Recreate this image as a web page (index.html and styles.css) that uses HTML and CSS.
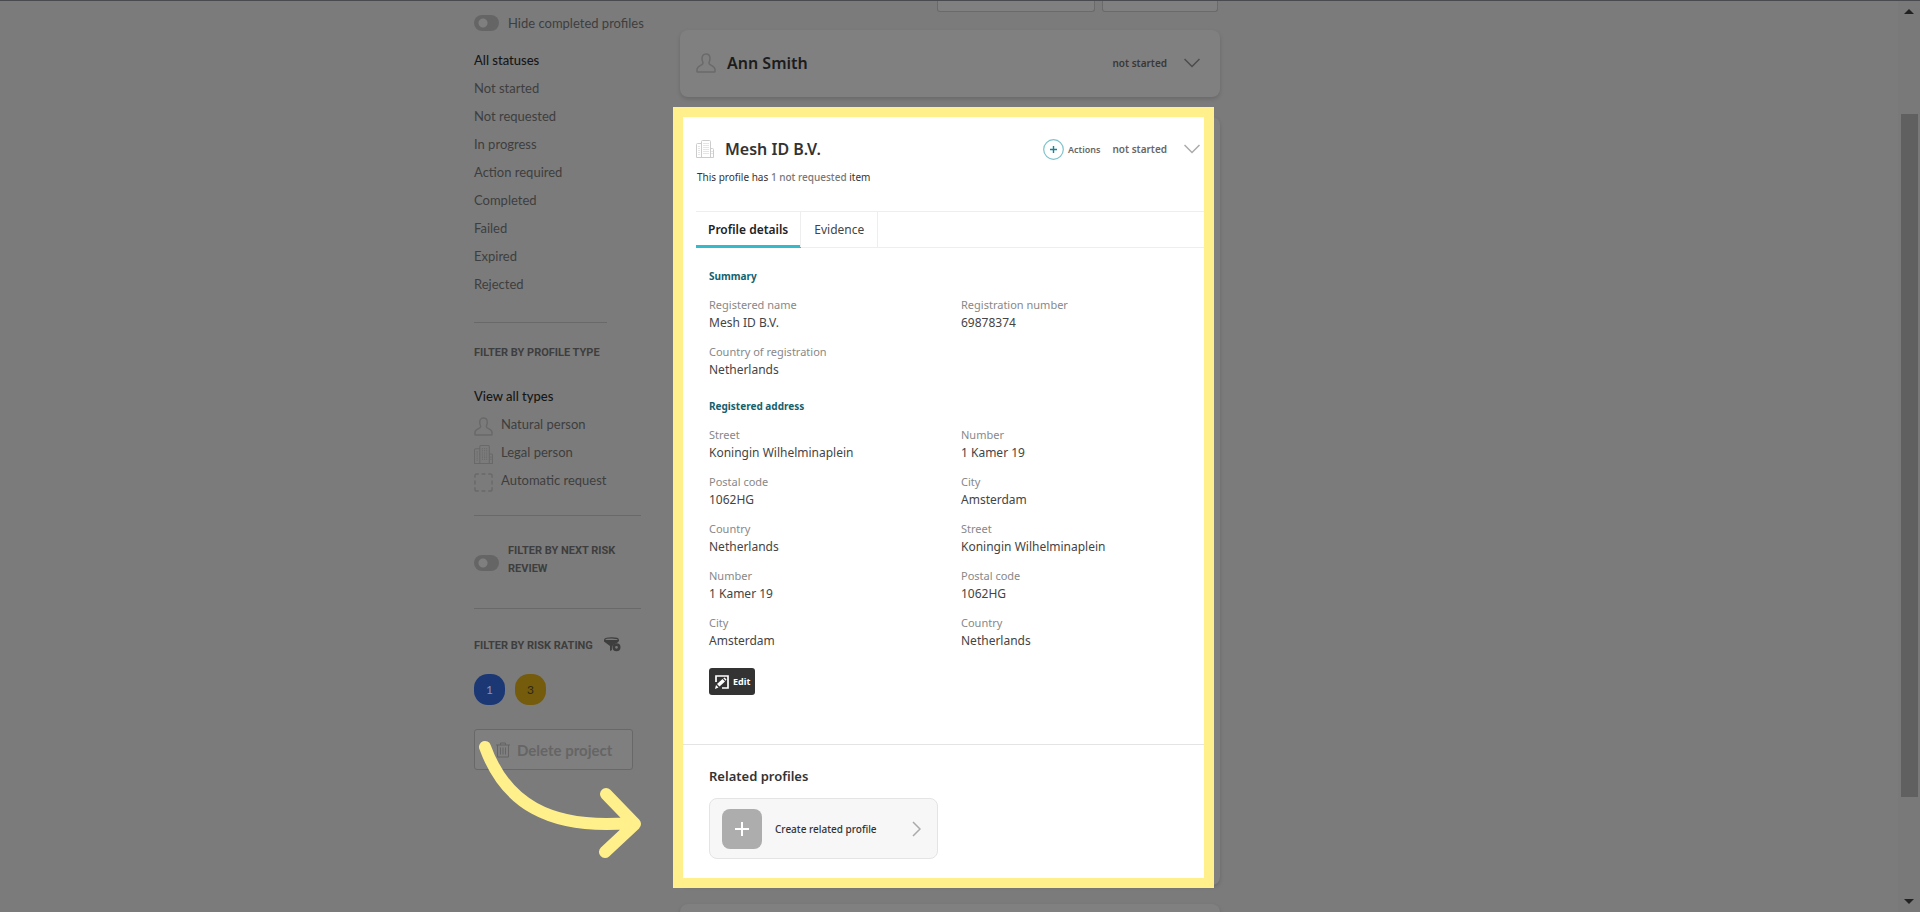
FILE: index.html
```
<!DOCTYPE html>
<html lang="en">
<head>
    <meta charset="utf-8">
    <title>Profiles</title>
    <link rel="stylesheet" href="styles.css">
</head>
<body>
    <svg class="sprite" aria-hidden="true">
        <symbol id="icon-person" viewBox="0 0 20 20">
            <path d="M10 1C7.400 1 6 2.900 6 5.500C6 8 7 8.800 7 10.200C7 12.500 1 12.300 1 16.500V18.500Q1 19 1.500 19H18.500Q19 19 19 18.500V16.500C19 12.300 13 12.500 13 10.200C13 8.800 14 8 14 5.500C14 2.900 12.600 1 10 1Z" fill="none" stroke="currentColor" stroke-width="1.500"/>
        </symbol>
        <symbol id="icon-building" viewBox="0 0 18 18">
            <path d="M5.500 17.500V1.500Q5.500 .5 6.500 .5H13.500Q14.500 .5 14.500 1.500V17.500M5.500 3.500H1.500Q.5 3.500 .5 4.500V17.500H17.500V9.500Q17.500 8.500 16.500 8.500H14.500" fill="none" stroke="currentColor"/>
            <path d="M8 3V15M10 3V15M12 3V15M3 6V15M16 11V15" fill="none" stroke="currentColor" stroke-dasharray="1 1"/>
        </symbol>
        <symbol id="icon-dashed" viewBox="0 0 20 20">
            <path d="M1 5V3Q1 1 3 1H5M8 1H12M15 1H17Q19 1 19 3V5M19 8V12M19 15V17Q19 19 17 19H15M12 19H8M5 19H3Q1 19 1 17V15M1 12V8" fill="none" stroke="currentColor" stroke-width="1.500"/>
        </symbol>
        <symbol id="icon-down" viewBox="0 0 16 10">
            <path d="M.5 1L8 8.500L15.500 1" fill="none" stroke="currentColor" stroke-width="1.500"/>
        </symbol>
    </svg>

    <div class="page">
        <div class="container">
            <aside class="sidebar">
                <label class="toggle">
                    <input type="checkbox">
                    <span>Hide completed profiles</span>
                </label>
                <ul class="filter-list statuses">
                    <li><a href="#" class="active">All statuses</a></li>
                    <li><a href="#">Not started</a></li>
                    <li><a href="#">Not requested</a></li>
                    <li><a href="#">In progress</a></li>
                    <li><a href="#">Action required</a></li>
                    <li><a href="#">Completed</a></li>
                    <li><a href="#">Failed</a></li>
                    <li><a href="#">Expired</a></li>
                    <li><a href="#">Rejected</a></li>
                </ul>

                <section class="types">
                    <h3>FILTER BY PROFILE TYPE</h3>
                    <ul class="filter-list">
                        <li><a href="#" class="active">View all types</a></li>
                        <li><a href="#"><svg><use href="#icon-person"/></svg>Natural person</a></li>
                        <li><a href="#"><svg><use href="#icon-building"/></svg>Legal person</a></li>
                        <li><a href="#"><svg><use href="#icon-dashed"/></svg>Automatic request</a></li>
                    </ul>
                </section>

                <section class="review">
                    <label class="toggle">
                        <input type="checkbox">
                        <span class="heading">FILTER BY NEXT RISK REVIEW</span>
                    </label>
                </section>

                <section class="rating">
                    <h3>FILTER BY RISK RATING
                        <svg class="funnel" viewBox="0 0 17 15">
                            <path d="M0 3V4.500L6 9V14L8 13C7.500 9 9 7 13 6L15 4V3Z" fill="currentColor"/>
                            <ellipse cx="7.500" cy="2.500" rx="6.800" ry="1.700" fill="none" stroke="currentColor" stroke-width="1.200"/>
                            <circle cx="12.500" cy="10.300" r="2.700" fill="none" stroke="currentColor" stroke-width="2.600"/>
                        </svg>
                    </h3>
                    <div class="ratings">
                        <button class="rate low">1</button>
                        <button class="rate high">3</button>
                    </div>
                    <button class="delete">
                        <svg viewBox="0 0 14 16">
                            <path d="M0 3H14M4.500 3V1H9.500V3M1.500 3V15H12.500V3M4.500 5.500V12.500M7 5.500V12.500M9.500 5.500V12.500" fill="none" stroke="currentColor"/>
                        </svg>
                        Delete project
                    </button>
                </section>
                <svg class="arrow" viewBox="0 0 170 125">
                    <path d="M11 11C31 66 74 94 156 87M132 58L161 88L131 116"/>
                </svg>
            </aside>

            <main class="main">
                <div class="toolbar">
                    <button class="sort" aria-label="Sort"></button>
                    <button class="group" aria-label="Group"></button>
                </div>

                <article class="card person">
                    <svg class="person-icon"><use href="#icon-person"/></svg>
                    <h2>Ann Smith</h2>
                    <span class="status">not started</span>
                    <button class="expand" aria-label="Expand"><svg><use href="#icon-down"/></svg></button>
                </article>

                <article class="card company">
                    <div class="highlight">
                        <header class="company-head">
                            <svg class="building-icon"><use href="#icon-building"/></svg>
                            <h2>Mesh ID B.V.</h2>
                            <button class="actions">
                                <svg viewBox="0 0 21 21">
                                    <circle cx="10.500" cy="10.500" r="9.800" fill="none" stroke="#7cc3cc" stroke-width="1.200"/>
                                    <path d="M7 10.500H14M10.500 7V14" stroke="#168294" stroke-width="1.400"/>
                                </svg>
                                Actions
                            </button>
                            <span class="status">not started</span>
                            <button class="expand" aria-label="Collapse"><svg><use href="#icon-down"/></svg></button>
                        </header>
                        <p class="note">This profile has <b>1 not requested</b> item</p>

                        <nav class="tabs">
                            <button class="tab active">Profile details</button>
                            <button class="tab">Evidence</button>
                        </nav>

                        <div class="details">
                            <h4>Summary</h4>
                            <dl>
                                <div><dt>Registered name</dt><dd>Mesh ID B.V.</dd></div>
                                <div><dt>Registration number</dt><dd>69878374</dd></div>
                                <div><dt>Country of registration</dt><dd>Netherlands</dd></div>
                            </dl>
                            <h4>Registered address</h4>
                            <dl>
                                <div><dt>Street</dt><dd>Koningin Wilhelminaplein</dd></div>
                                <div><dt>Number</dt><dd>1 Kamer 19</dd></div>
                                <div><dt>Postal code</dt><dd>1062HG</dd></div>
                                <div><dt>City</dt><dd>Amsterdam</dd></div>
                                <div><dt>Country</dt><dd>Netherlands</dd></div>
                                <div><dt>Street</dt><dd>Koningin Wilhelminaplein</dd></div>
                                <div><dt>Number</dt><dd>1 Kamer 19</dd></div>
                                <div><dt>Postal code</dt><dd>1062HG</dd></div>
                                <div><dt>City</dt><dd>Amsterdam</dd></div>
                                <div><dt>Country</dt><dd>Netherlands</dd></div>
                            </dl>
                            <button class="edit">
                                <svg viewBox="0 0 14 14">
                                    <path d="M1 7V1H13V13H7" fill="none" stroke="#fff" stroke-width="1.700"/>
                                    <path d="M0 14L1 10L3.500 12.500ZM2 9L7.500 4L10 6.500L4.500 11.500ZM8.300 3.300L9.500 2.500L11.500 4.500L10.700 5.700Z" fill="#fff"/>
                                </svg>
                                Edit
                            </button>
                        </div>

                        <section class="related">
                            <h3>Related profiles</h3>
                            <button class="create">
                                <span class="plus">
                                    <svg viewBox="0 0 14 14"><path d="M0 7H14M7 0V14" stroke="#fff" stroke-width="2"/></svg>
                                </span>
                                <span class="create-text">Create related profile</span>
                                <svg class="next" viewBox="0 0 9 16"><path d="M1 1L8 8L1 15" fill="none" stroke="#aaa" stroke-width="1.500"/></svg>
                            </button>
                        </section>
                    </div>
                </article>

                <article class="card next-card"></article>
            </main>
        </div>
    </div>

    <div class="scrollbar">
        <span class="up"></span>
        <span class="thumb"></span>
        <span class="down"></span>
    </div>
</body>
</html>
```
FILE: styles.css
```
* {
    box-sizing: border-box;
}
body {
    margin: 0;
    height: 100vh;
    overflow: hidden;
    display: flex;
    background-color: #7b7b7b;
    border-top: 1px solid #484a50;
    font-family: "Noto Sans", sans-serif;
    color: #333;
}
h2, h3, h4, p, ul, dl, dd {
    margin: 0;
    padding: 0;
}
button {
    font-family: inherit;
    border: none;
    background: none;
    padding: 0;
    cursor: pointer;
}
.sprite {
    display: none;
}
.page {
    flex: 1;
    height: 100%;
    overflow: hidden;
}
.container {
    max-width: 950px;
    height: 100%;
    margin: 0 auto;
    display: flex;
}

/* sidebar */
.sidebar {
    width: 206px;
    padding-top: 12px;
    position: relative;
    font-family: Lato, sans-serif;
    font-size: 13px;
    color: #3e3e3e;
}
.toggle {
    display: flex;
    align-items: center;
    gap: 9px;
    line-height: 20px;
}
.toggle input {
    appearance: none;
    flex: none;
    margin: 0;
    width: 25px;
    height: 16px;
    border-radius: 8px;
    background: radial-gradient(circle at 9px 8px, #7f7f7f 4px, #656565 5px);
}
.filter-list {
    list-style: none;
    line-height: 28px;
}
.filter-list a {
    display: flex;
    align-items: center;
    color: inherit;
    text-decoration: none;
}
.filter-list a.active {
    color: #161616;
    font-weight: 500;
}
.filter-list svg {
    width: 19px;
    height: 19px;
    margin-right: 8px;
    margin-top: 4px;
    color: #696969;
}
.statuses {
    margin-top: 13px;
}
.statuses .active {
    font-weight: 700;
}
.sidebar h3, .heading {
    font-family: Roboto, sans-serif;
    font-size: 11px;
    font-weight: 700;
    line-height: 18px;
}
.types {
    margin-top: 24px;
    width: 167px;
    border-bottom: 1px solid #696969;
    padding-bottom: 21px;
}
.types h3 {
    width: 133px;
    border-top: 1px solid #696969;
    padding-top: 21px;
    margin-bottom: 20px;
    white-space: nowrap;
}
.review {
    width: 167px;
    padding: 26px 0 30px;
    border-bottom: 1px solid #696969;
}
.review input {
    margin-top: 6px;
}
.rating h3 {
    display: flex;
    gap: 11px;
    white-space: nowrap;
    margin-top: 28px;
}
.funnel {
    width: 17px;
    height: 15px;
}
.ratings {
    display: flex;
    gap: 10px;
    margin-top: 19px;
}
.rate {
    width: 31px;
    height: 31px;
    border-radius: 14px;
    font-size: 12px;
}
.low {
    background-color: #1b3875;
    color: #8c93a3;
}
.high {
    background-color: #755b0c;
    color: #2d2718;
}
.delete {
    display: flex;
    align-items: center;
    gap: 7px;
    margin-top: 24px;
    width: 159px;
    height: 41px;
    padding-left: 21px;
    border: 1px solid #686868;
    border-radius: 3px;
    background-color: #7f7f7f;
    color: #656565;
    font-size: 15px;
    font-weight: 700;
}
.delete svg {
    width: 14px;
    height: 16px;
}
.arrow {
    position: absolute;
    left: 0;
    top: 735px;
    width: 170px;
    height: 125px;
    fill: none;
    stroke: #fff08c;
    stroke-width: 12px;
    stroke-linecap: round;
    stroke-linejoin: round;
}

/* profiles */
.main {
    width: 540px;
}
.toolbar {
    display: flex;
    justify-content: flex-end;
    gap: 7px;
    height: 11px;
    padding-right: 2px;
    margin-bottom: 18px;
}
.toolbar button {
    border: 1px solid #6a6a6a;
    border-top: none;
    border-radius: 0 0 3px 3px;
    background-color: #808080;
}
.sort {
    width: 158px;
}
.group {
    width: 116px;
}
.card {
    background-color: #808080;
    border-radius: 8px;
    box-shadow: 0 2px 4px rgba(0,0,0,0.15);
}
.card h2 {
    font-size: 16px;
    font-weight: 600;
    line-height: 24px;
}
.status {
    font-size: 10px;
    font-weight: 600;
    color: #666;
    margin-left: auto;
}
.expand {
    display: flex;
    margin-left: 17px;
    color: #aaa;
}
.expand svg {
    width: 16px;
    height: 10px;
}
.person {
    display: flex;
    align-items: center;
    height: 67px;
    padding: 0 20px 2px 16px;
    margin-bottom: 20px;
}
.person h2 {
    color: #1c1c1c;
    margin-left: 11px;
}
.person .status {
    color: #383838;
}
.person .expand {
    color: #4c4c4c;
}
.person-icon {
    width: 20px;
    height: 20px;
    color: #6a6a6a;
}
.company {
    padding-right: 6px;
    height: 768px;
    margin-bottom: 19px;
}
.highlight {
    margin-left: -7px;
    position: relative;
    top: -10px;
    background-color: #fff;
    border: 10px solid #fff08c;
}
.company-head {
    display: flex;
    align-items: center;
    padding: 20px 4px 0 13px;
}
.company-head h2 {
    margin-left: 11px;
}
.building-icon {
    width: 18px;
    height: 18px;
    color: #ccc;
}
.actions {
    display: flex;
    align-items: center;
    gap: 4px;
    margin-left: auto;
    font-size: 9px;
    font-weight: 600;
    color: #666;
}
.actions svg {
    width: 21px;
    height: 21px;
}
.company-head .status {
    margin-left: 12px;
}
.note {
    padding-left: 14px;
    margin-top: 8px;
    font-size: 10px;
    line-height: 16px;
}
.note b {
    font-weight: 500;
    color: #777;
}
.tabs {
    display: flex;
    height: 37px;
    margin: 26px 0 0 13px;
    border-top: 1px solid #eee;
    border-bottom: 1px solid #eee;
}
.tab {
    padding: 0 13px;
    border-right: 1px solid #eee;
    font-size: 12px;
    color: #444;
}
.tab.active {
    padding: 0 12px;
    font-weight: 600;
    color: #222;
    box-shadow: 0 1px #35bac9, inset 0 -2px #35bac9;
}
.details {
    padding: 19px 0 49px 26px;
}
.details h4 {
    font-size: 10px;
    font-weight: 700;
    line-height: 18px;
    color: #16606c;
}
.details dl {
    display: grid;
    grid-template-columns: 252px 1fr;
    row-gap: 11px;
    margin: 11px 0 18px;
}
.details dt {
    font-size: 11px;
    line-height: 18px;
    color: #888;
}
.details dd {
    font-size: 12px;
    line-height: 18px;
    color: #444;
}
.edit {
    display: flex;
    align-items: center;
    gap: 4px;
    width: 46px;
    height: 27px;
    padding-left: 6px;
    border-radius: 3px;
    background-color: #333;
    color: #fff;
    font-size: 9px;
    font-weight: 700;
}
.edit svg {
    width: 14px;
    height: 14px;
}
.related {
    border-top: 1px solid #e4e4e4;
    padding: 20px 26px 19px;
}
.related h3 {
    font-size: 13px;
    font-weight: 600;
    line-height: 22px;
}
.create {
    display: flex;
    align-items: center;
    width: 229px;
    height: 61px;
    margin-top: 11px;
    padding: 0 16px 0 12px;
    border: 1px solid #e4e4e4;
    border-radius: 8px;
    background-color: #f7f7f7;
    color: #333;
}
.plus {
    display: flex;
    align-items: center;
    justify-content: center;
    width: 40px;
    height: 40px;
    border-radius: 8px;
    background-color: #adadad;
}
.plus svg {
    width: 14px;
    height: 14px;
}
.create-text {
    margin-left: 13px;
    font-size: 10px;
    font-weight: 500;
}
.next {
    width: 9px;
    height: 16px;
    margin-left: auto;
}
.next-card {
    height: 67px;
}

/* scrollbar */
.scrollbar {
    display: flex;
    flex-direction: column;
    align-items: center;
    width: 22px;
    padding: 8px 0;
    background-color: #797979;
}
.up, .down {
    border: 5px solid transparent;
}
.up {
    border-top: none;
    border-bottom-color: #222;
}
.down {
    border-bottom: none;
    border-top-color: #222;
}
.thumb {
    width: 17px;
    flex: 1;
    margin: 100px 0 102px;
    background-color: #606060;
}
```
